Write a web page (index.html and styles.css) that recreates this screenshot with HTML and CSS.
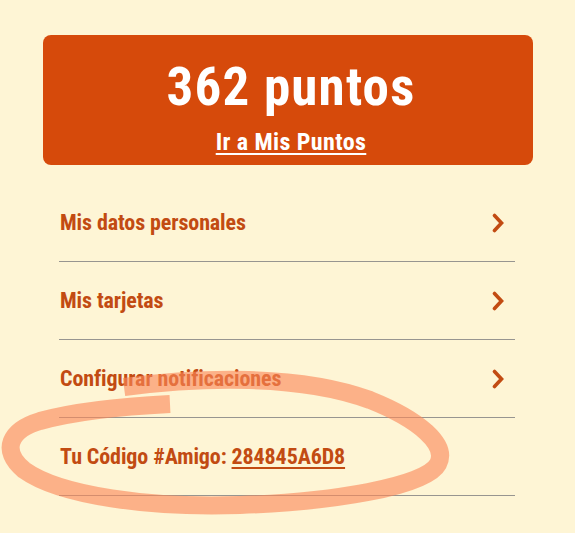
FILE: index.html
```html
<!DOCTYPE html>
<html lang="es">
<head>
<meta charset="utf-8">
<title>Mi cuenta</title>
<link rel="stylesheet" href="styles.css">
</head>
<body>
<main class="page">
  <section class="points-card">
    <div class="points-value">362 puntos</div>
    <a class="points-link" href="#">Ir a Mis Puntos</a>
  </section>
  <ul class="menu">
    <li class="menu-item">
      <span class="menu-label">Mis datos personales</span>
      <svg class="chevron" viewBox="0 0 12 20" aria-hidden="true"><path d="M2.5 2.5 L9.5 10 L2.5 17.5" /></svg>
    </li>
    <li class="menu-item">
      <span class="menu-label">Mis tarjetas</span>
      <svg class="chevron" viewBox="0 0 12 20" aria-hidden="true"><path d="M2.5 2.5 L9.5 10 L2.5 17.5" /></svg>
    </li>
    <li class="menu-item">
      <span class="menu-label">Configurar notificaciones</span>
      <svg class="chevron" viewBox="0 0 12 20" aria-hidden="true"><path d="M2.5 2.5 L9.5 10 L2.5 17.5" /></svg>
    </li>
    <li class="menu-item">
      <span class="menu-label">Tu Código #Amigo: <a class="code" href="#">284845A6D8</a></span>
    </li>
  </ul>
  <svg class="scribble" viewBox="0 0 575 533" aria-hidden="true">
    <path d="M124 387 C200 377 300 374 370 400 C420 420 448 445 438 464 C426 487 330 502 240 505 C150 508 60 496 24 470 C0 450 10 430 40 421 C80 410 130 406 170 404" />
  </svg>
</main>
</body>
</html>
```
FILE: styles.css
```css
html, body {
  margin: 0;
  padding: 0;
  background: #fef5d5;
}
body {
  font-family: "Roboto Condensed", "Liberation Sans Narrow", "Roboto", sans-serif;
  font-weight: 700;
}
.page {
  position: relative;
  width: 575px;
  height: 533px;
  box-sizing: border-box;
  padding: 35px 0 0;
  overflow: hidden;
}
.points-card {
  margin: 0 42px 0 43px;
  height: 130px;
  box-sizing: border-box;
  background: #d64a0b;
  border-radius: 8px;
  display: flex;
  flex-direction: column;
  align-items: center;
  padding: 26px 0 0 6px;
  color: #fff;
}
.points-value {
  font-size: 53px;
  line-height: 52px;
  letter-spacing: 1.2px;
}
.points-link {
  margin-top: 17px;
  font-size: 24px;
  line-height: 24px;
  letter-spacing: 0.4px;
  color: #fff;
  text-decoration: underline;
  text-decoration-thickness: 2px;
  text-underline-offset: 3px;
}
.menu {
  list-style: none;
  margin: 19px 60px 0 59px;
  padding: 0;
}
.menu-item {
  height: 78px;
  box-sizing: border-box;
  border-bottom: 1px solid #979590;
  display: flex;
  align-items: center;
  justify-content: space-between;
  padding: 0 11px 0 1px;
  color: #c24b12;
  font-size: 22px;
  letter-spacing: -0.1px;
}
.code {
  color: #c24b12;
  text-decoration: underline;
  text-decoration-thickness: 2px;
  text-underline-offset: 3px;
}
.chevron {
  width: 12px;
  height: 20px;
  fill: none;
  stroke: #c24b12;
  stroke-width: 3.6;
  stroke-linecap: round;
  stroke-linejoin: miter;
}
.scribble {
  position: absolute;
  left: 0;
  top: 0;
  width: 575px;
  height: 533px;
  pointer-events: none;
  fill: none;
  stroke: rgba(250, 136, 88, 0.62);
  stroke-width: 18;
  stroke-linecap: butt;
  stroke-linejoin: round;
}
```
